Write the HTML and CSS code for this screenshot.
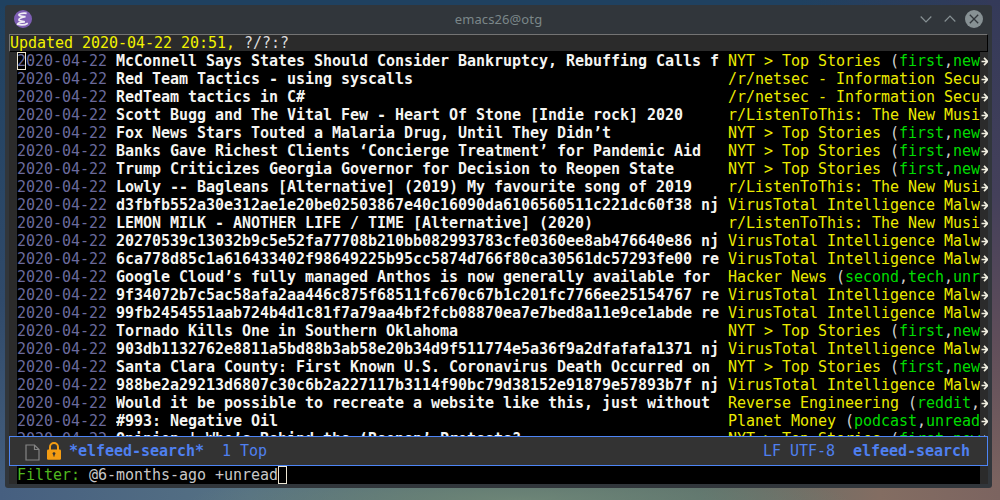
FILE: index.html
```html
<!DOCTYPE html>
<html lang="en">
<head>
<meta charset="utf-8">
<title>emacs26@otg</title>
<link rel="stylesheet" href="styles.css">
</head>
<body>
<main class="window">
  <header class="titlebar">
    <svg class="logo" width="18" height="18" viewBox="0 0 18 18"><circle cx="9" cy="9" r="9" fill="#7e5fb5"/><path d="M12.600 3.400C9 2.700 4.300 3.800 5 5.200C5.700 6.500 9 6.500 11.500 6.700C8 7.300 4.400 8.600 4.900 9.900C5.400 11.300 8.500 11.200 10.800 11.800C7 12.100 3.800 12.900 3.600 14.200C6.800 15.200 11 15 13.800 13.200" fill="none" stroke="#f0eef5" stroke-width="1.700"/></svg>
    <span class="title">emacs26@otg</span>
    <div class="controls">
      <svg width="12" height="18" viewBox="0 0 12 18"><path d="M.7 6.500L6 11.800L11.300 6.500" fill="none" stroke="#879194" stroke-width="1.200"/></svg>
      <svg width="12" height="18" viewBox="0 0 12 18"><path d="M.7 11.500L6 6.200L11.300 11.500" fill="none" stroke="#879194" stroke-width="1.200"/></svg>
      <svg width="18" height="18" viewBox="0 0 18 18"><circle cx="9" cy="9" r="9" fill="#879194"/><path d="M4.800 4.800L13.200 13.200M13.200 4.800L4.800 13.200" stroke="#31363b" stroke-width="1.300"/></svg>
    </div>
  </header>
  <div class="frame">
    <div class="headerline"><span class="updated">Updated 2020-04-22 20:51,</span> ?/?:?</div>
    <div class="buffer" id="buffer"></div>
    <div class="modeline">
      <svg class="doc" width="15" height="17" viewBox="0 0 15 17"><path d="M1 1H9.500L14 5.500V16H1ZM9.500 1V5.500H14" fill="none" stroke="#858585" stroke-width="1.200"/></svg>
      <svg class="lock" width="14" height="18" viewBox="0 0 14 18"><path d="M3 8V5A4 4 0 0 1 11 5V8" fill="none" stroke="#f39c12" stroke-width="2"/><rect y="7.500" width="14" height="10.300" rx="1.200" fill="#f39c12"/><circle cx="7" cy="11.600" r="1.400" fill="#333"/><path d="M7 12V14.500" stroke="#333" stroke-width="1.200"/></svg>
      <b>*elfeed-search*</b><span class="position">1 Top</span>
      <span class="coding">LF UTF-8</span><b class="mode">elfeed-search</b>
    </div>
    <div class="minibuffer"><div class="input"><span class="prompt">Filter:</span> @6-months-ago +unread<i class="cursor"></i></div></div>
  </div>
</main>
<script src="app.js"></script>
</body>
</html>
```
FILE: styles.css
```css
* { box-sizing: border-box; }
body {
  margin: 0;
  height: 500px;
  padding: 5px 8px 12px 5px;
  overflow: hidden;
  background:
    radial-gradient(ellipse 330px 30px at 520px 500px, #6d8577, transparent),
    linear-gradient(to right, #465f80 0, #567284 25%, #5b7470 48%, #5c706a 70%, #836d62 88%, #7c6460) 0 480px / 100% 20px no-repeat,
    linear-gradient(#343a59, #44405a 40%, #604e5a 70%, #7c6460) 100% 0 / 12px 490px no-repeat,
    linear-gradient(to right, #1f4160 80%, #343a59) 0 0 / 100% 8px no-repeat,
    linear-gradient(#1f4160, #304a6a 60%, #46607f);
}
.window {
  height: 483px;
  padding: 0 4px 4px;
  border-radius: 3px;
  background: #31363b;
  font: 15px/18px "DejaVu Sans Mono", monospace;
  letter-spacing: -0.031px;
}
.titlebar {
  height: 29px;
  padding: 0 5px 1px;
  display: grid;
  grid-template-columns: 80px 1fr 80px;
  align-items: center;
}
.title {
  text-align: center;
  font: 13px/18px "Noto Sans", sans-serif;
  letter-spacing: 0.1px;
  color: #7b8789;
}
.controls { display: flex; justify-content: flex-end; gap: 12px; }
.controls svg:last-child { margin-left: -3px; }
.frame { height: 450px; background: #000; display: flex; flex-direction: column; }
.headerline {
  height: 18px;
  line-height: 17px;
  background: #2b2b2b;
  color: #dcdcdc;
  border: 1px solid #000;
  border-top-color: #747474;
  border-left-color: #747474;
}
.updated { color: #f2f200; }
.feed { color: #ebeb00; }
.buffer { height: 384px; overflow: hidden; background: #000; }
.row {
  height: 18px;
  display: grid;
  grid-template-columns: 8px 99px 612px 252px 8px;
  white-space: pre;
}
.row > * { overflow: hidden; }
.fringe { background: #2b2b2b; }
.fringe svg { display: block; }
.date { color: #6a6a9c; }
.first { box-shadow: inset 0 0 0 1px #eee8d5; width: 9px; display: inline-block; height: 18px; vertical-align: top; }
.headline { font-weight: bold; color: #f5f5f2; }
.tag { color: #00dc00; }
.feed i { font-style: normal; color: #d0d0d0; }
.modeline {
  height: 30px;
  padding: 0 12px 0 15px;
  display: flex;
  align-items: center;
  background: #333;
  border: 1px solid #4d85f5;
  color: #4f80f0;
}
.lock { margin: 0 8px 0 7px; }
.doc { margin-top: 2px; }
.position { margin-left: 18px; }
.coding { margin-left: auto; }
.mode { margin-left: 18px; margin-right: 5px; }
.minibuffer { height: 18px; background: #2b2b2b; padding: 0 8px; }
.input { background: #000; color: #c8c8c8; display: flex; height: 18px; white-space: pre; }
.prompt { color: #4fb81f; }
.cursor { width: 9px; height: 18px; border: 1px solid #eee8d5; }
```
FILE: app.js
```js
const NYT = "NYT > Top Stories (first,new";
const NETSEC = "/r/netsec - Information Secu";
const LISTEN = "r/ListenToThis: The New Musi";
const VT = "VirusTotal Intelligence Malw";
const entries = [
  ["McConnell Says States Should Consider Bankruptcy, Rebuffing Calls f", NYT],
  ["Red Team Tactics - using syscalls", NETSEC],
  ["RedTeam tactics in C#", NETSEC],
  ["Scott Bugg and The Vital Few - Heart Of Stone [Indie rock] 2020", LISTEN],
  ["Fox News Stars Touted a Malaria Drug, Until They Didn’t", NYT],
  ["Banks Gave Richest Clients ‘Concierge Treatment’ for Pandemic Aid", NYT],
  ["Trump Criticizes Georgia Governor for Decision to Reopen State", NYT],
  ["Lowly -- Bagleans [Alternative] (2019) My favourite song of 2019", LISTEN],
  ["d3fbfb552a30e312ae1e20be02503867e40c16090da6106560511c221dc60f38 nj", VT],
  ["LEMON MILK - ANOTHER LIFE / TIME [Alternative] (2020)", LISTEN],
  ["20270539c13032b9c5e52fa77708b210bb082993783cfe0360ee8ab476640e86 nj", VT],
  ["6ca778d85c1a616433402f98649225b95cc5874d766f80ca30561dc57293fe00 re", VT],
  ["Google Cloud’s fully managed Anthos is now generally available for", "Hacker News (second,tech,unr"],
  ["9f34072b7c5ac58afa2aa446c875f68511fc670c67b1c201fc7766ee25154767 re", VT],
  ["99fb2454551aab724b4d1c81f7a79aa4bf2fcb08870ea7e7bed8a11e9ce1abde re", VT],
  ["Tornado Kills One in Southern Oklahoma", NYT],
  ["903db1132762e8811a5bd88b3ab58e20b34d9f511774e5a36f9a2dfafafa1371 nj", VT],
  ["Santa Clara County: First Known U.S. Coronavirus Death Occurred on", NYT],
  ["988be2a29213d6807c30c6b2a227117b3114f90bc79d38152e91879e57893b7f nj", VT],
  ["Would it be possible to recreate a website like this, just without", "Reverse Engineering (reddit,"],
  ["#993: Negative Oil", "Planet Money (podcast,unread"],
  ["Opinion | Who’s Behind the ‘Reopen’ Protests?", NYT]
];

// Tags follow the feed name inside parentheses and are coloured separately.
function feedMarkup(feed) {
  const [name, tags] = feed.replace(">", "&gt;").split("(");
  if (!tags) return name;
  return name + "<i>(</i>" + tags.split(",").map(t => `<span class="tag">${t}</span>`).join("<i>,</i>");
}

const arrow = '<svg width="8" height="18" viewBox="0 0 8 18"><path d="M1.500 9.500H7M4 5.800L7.500 9.500L4 13.200" fill="none" stroke="#f0eee0" stroke-width="1.700"/></svg>';
document.getElementById("buffer").innerHTML = entries.map(([title, feed], n) =>
  `<div class="row"><span class="fringe"></span><span class="date">${n ? "2" : '<span class="first">2</span>'}020-04-22</span>` +
  `<span class="headline">${title}</span><span class="feed">${feedMarkup(feed)}</span><span class="fringe">${arrow}</span></div>`
).join("");
```
